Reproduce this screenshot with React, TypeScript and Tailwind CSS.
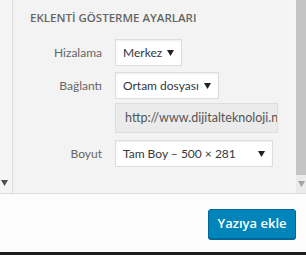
import React from "react";

const Arrow = ({ className = "" }: { className?: string }) => (
  <svg width="7" height="6" viewBox="0 0 7 6" className={className}>
    <path d="M0 0 H7 L3.5 6 Z" fill="currentColor" />
  </svg>
);

const Select = ({ text, width, arrowRight }: { text: string; width: string; arrowRight: string }) => (
  <div className={`relative h-[27px] bg-white border border-[#dddddd] shadow-[inset_0_1px_2px_rgba(0,0,0,0.07)] flex items-center pl-[7px] text-[12px] text-[#32373c] whitespace-nowrap ${width}`}>
    <span>{text}</span>
    <Arrow className={`absolute top-[10px] text-[#222] ${arrowRight}`} />
  </div>
);

export default function App() {
  return (
    <div
      className="w-[306px] h-[255px] flex flex-col bg-[#fcfcfc] overflow-hidden"
      style={{ fontFamily: 'Lato, "Open Sans", sans-serif' }}
    >
      <div className="flex h-[194px] border-b border-[#dddddd]">
        <div className="w-[13px] border-r border-[#dddddd] bg-[#f5f5f5] flex flex-col justify-end pb-[7px]">
          <Arrow className="text-[#505050] ml-[1px]" />
        </div>
        <div className="flex-1 bg-[#f3f3f3] pl-[17px] pt-[9px]">
          <div
            className="h-[18px] leading-[18px] text-[11.5px] font-semibold text-[#666666] uppercase"
            style={{ fontFamily: '"Open Sans", sans-serif' }}
          >
            EKLENTİ GÖSTERME AYARLARI
          </div>
          <div className="mt-[12px] flex items-center">
            <div className="w-[72px] text-right text-[12px] text-[#666666]">Hizalama</div>
            <div className="ml-[13px]">
              <Select text="Merkez" width="w-[67px]" arrowRight="right-[7px]" />
            </div>
          </div>
          <div className="mt-[6px] flex items-center">
            <div className="w-[72px] text-right text-[12px] text-[#666666]">Bağlantı</div>
            <div className="ml-[13px]">
              <Select text="Ortam dosyası" width="w-[104px]" arrowRight="right-[7px]" />
            </div>
          </div>
          <div className="mt-[4px] flex">
            <div className="w-[72px]" />
            <div className="ml-[13px] h-[30px] w-[163px] bg-[#ebebeb] border border-[#dddddd] flex items-center pl-[9px] overflow-hidden whitespace-nowrap text-[12.5px] text-[#555555]">
              http://www.dijitalteknoloji.net/
            </div>
          </div>
          <div className="mt-[7px] flex items-center">
            <div className="w-[72px] text-right text-[12px] text-[#666666]">Boyut</div>
            <div className="ml-[13px]">
              <Select text="Tam Boy – 500 × 281" width="w-[158px]" arrowRight="right-[7px]" />
            </div>
          </div>
        </div>
        <div className="w-[18px] bg-[#f3f3f3] flex">
          <div className="w-[8px] bg-[#f5f5f5]" />
          <div className="flex-1 flex flex-col bg-[#ebebeb]">
            <div className="h-[175px] bg-[#c4c4c4]" />
            <div className="flex-1 flex justify-center pt-[6px]">
              <Arrow className="text-[#a3a3a3]" />
            </div>
          </div>
        </div>
      </div>
      <div className="flex-1 flex justify-end items-start pt-[15px] pr-[10px]">
        <button
          className="h-[30px] w-[88px] rounded-[3px] bg-[#0085ba] border border-[#006799] text-white text-[13px] font-semibold shadow-[0_1px_0_#006799]"
          style={{ fontFamily: '"Open Sans", sans-serif' }}
        >
          Yazıya ekle
        </button>
      </div>
      <div className="h-[3px] bg-[#1d1d1d]" />
    </div>
  );
}
